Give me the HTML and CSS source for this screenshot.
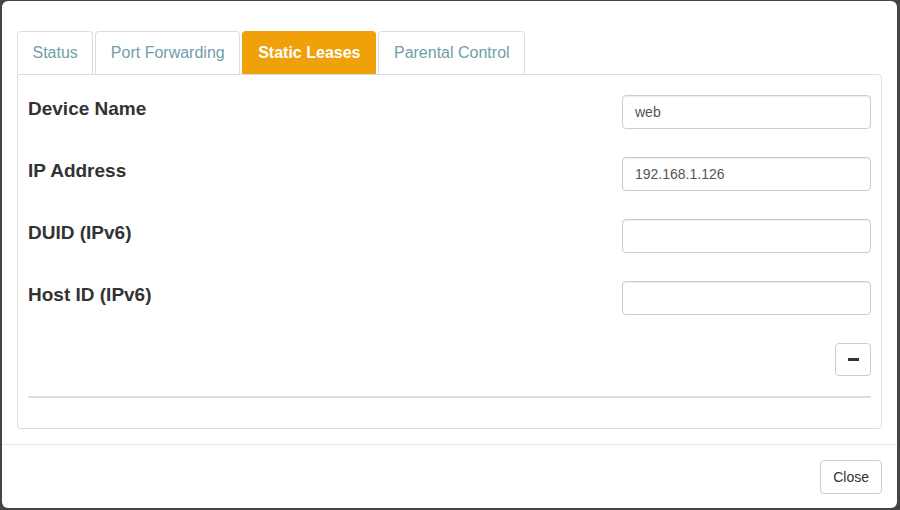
FILE: index.html
```html
<!DOCTYPE html>
<html lang="en">
<head>
    <meta charset="UTF-8">
    <title>Static Leases</title>
    <link rel="stylesheet" href="styles.css">
</head>
<body>
<div class="modal">
    <div class="modal-body">
        <ul class="tabs">
            <li><a href="#">Status</a></li>
            <li><a href="#">Port Forwarding</a></li>
            <li class="active"><a href="#">Static Leases</a></li>
            <li><a href="#">Parental Control</a></li>
        </ul>
        <div class="tab-panel">
            <div class="field">
                <label>Device Name</label>
                <input type="text" value="web">
            </div>
            <div class="field">
                <label>IP Address</label>
                <input type="text" value="192.168.1.126">
            </div>
            <div class="field">
                <label>DUID (IPv6)</label>
                <input type="text" value="">
            </div>
            <div class="field">
                <label>Host ID (IPv6)</label>
                <input type="text" value="">
            </div>
            <div class="actions">
                <button class="btn btn-remove"><span class="minus"></span></button>
            </div>
            <hr>
        </div>
    </div>
    <div class="modal-footer">
        <button class="btn">Close</button>
    </div>
</div>
</body>
</html>
```

FILE: styles.css
```css
body {
    margin: 0;
    background-color: #444;
    font-family: "Liberation Sans", Arial, sans-serif;
    font-size: 14px;
    color: #333;
}
.modal {
    margin: 1px 3px 0 2px;
    height: 507px;
    background-color: #fff;
    border-radius: 6px;
    box-sizing: border-box;
}
.modal-body {
    padding: 30px 15px 15px;
}
.tabs {
    list-style: none;
    margin: 0;
    padding: 0;
    display: flex;
}
.tabs li {
    margin-right: 2px;
}
.tabs a {
    display: block;
    padding: 10px 14.5px;
    font-size: 16px;
    line-height: 22px;
    color: #6fa0a8;
    text-decoration: none;
    border: 1px solid #ddd;
    border-bottom: none;
    border-radius: 4px 4px 0 0;
}
.tabs .active a {
    padding: 10px 15px;
    background-color: #f0a10a;
    border-color: #f0a10a;
    color: #fff;
    font-weight: bold;
}
.tab-panel {
    border: 1px solid #ddd;
    border-radius: 0 4px 4px 4px;
    padding: 20px 10px 10px;
}
.field {
    display: flex;
    justify-content: space-between;
    height: 34px;
    margin-bottom: 28px;
}
.field label {
    font-size: 19px;
    line-height: 27px;
    font-weight: bold;
}
.field input {
    width: 249px;
    height: 34px;
    box-sizing: border-box;
    padding: 6px 12px;
    border: 1px solid #ccc;
    border-radius: 4px;
    box-shadow: inset 0 1px 1px rgba(0, 0, 0, 0.075);
    font-family: "Liberation Sans", Arial, sans-serif;
    font-size: 14px;
    color: #555;
}
.actions {
    display: flex;
    justify-content: flex-end;
    margin-top: 1px;
}
.btn {
    background-color: #fff;
    border: 1px solid #ccc;
    border-radius: 4px;
    padding: 6px 12px;
    font-family: "Liberation Sans", Arial, sans-serif;
    font-size: 14px;
    line-height: 20px;
    color: #333;
}
.btn-remove {
    width: 36px;
    height: 33px;
    padding: 0;
    display: flex;
    align-items: center;
    justify-content: center;
}
.minus {
    display: block;
    width: 11px;
    height: 3px;
    background-color: #333;
}
hr {
    margin: 20px 0;
    border: none;
    border-top: 2px solid #ddd;
}
.modal-footer {
    border-top: 1px solid #e5e5e5;
    padding: 15px;
    display: flex;
    justify-content: flex-end;
}
```
